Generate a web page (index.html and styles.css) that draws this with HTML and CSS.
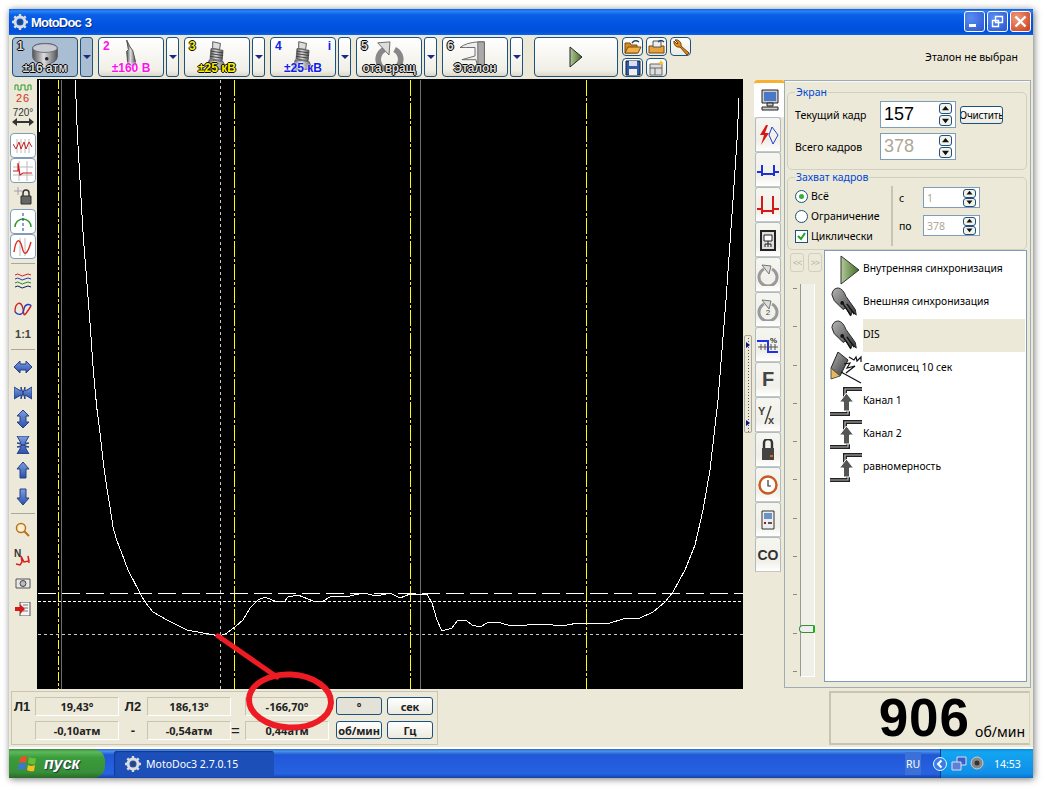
FILE: index.html
```html
<!DOCTYPE html>
<html lang="ru">
<head>
<meta charset="utf-8">
<title>MotoDoc 3</title>
<link rel="stylesheet" href="styles.css">
</head>
<body>
<svg class="defs" width="0" height="0">
  <defs>
    <linearGradient id="gm" x1="0" y1="0" x2="1" y2="0"><stop offset="0" stop-color="#555"/><stop offset=".45" stop-color="#ddd"/><stop offset="1" stop-color="#555"/></linearGradient>
    <linearGradient id="gb" x1="0" y1="0" x2="0" y2="1"><stop offset="0" stop-color="#7f9fe0"/><stop offset="1" stop-color="#2a4fa8"/></linearGradient>
    <linearGradient id="gg" x1="0" y1="0" x2="1" y2="0"><stop offset="0" stop-color="#b4c99a"/><stop offset="1" stop-color="#3f6b24"/></linearGradient>
    <linearGradient id="gd" x1="0" y1="0" x2="1" y2="1"><stop offset="0" stop-color="#b4b4b4"/><stop offset="1" stop-color="#333"/></linearGradient>
    <symbol id="plug" viewBox="0 0 30 36">
      <path d="M10 2l9 2-1 7-8-1z" fill="#ddd" stroke="#444"/>
      <path d="M8 10l14 2-1 12-14-2z" fill="url(#gm)" stroke="#555"/>
      <path d="M8 13l14 2M8 16l14 2M7 19l14 2" stroke="#333" fill="none"/>
      <path d="M6 23l16 2 4 9H3z" fill="url(#gm)" stroke="#555"/>
    </symbol>
    <symbol id="sync" viewBox="0 0 32 33">
      <path d="M2 8Q3 1 9 1q5 1 8 9l10 14 1 6-4-4-2 5-5-9-3 2-4-4Q3 15 2 8z" fill="url(#gd)" stroke="#222"/>
      <circle cx="13" cy="17" r="2" fill="#111"/>
      <path d="M14 18l8 12M18 18l8 11" stroke="#111" stroke-width="1.500" fill="none"/>
    </symbol>
    <symbol id="chan" viewBox="0 0 32 30">
      <path d="M32 2H15V11M18 15V27H0" fill="none" stroke="#222" stroke-width="4"/>
      <path d="M32 2H15V11M18 15V27H0" fill="none" stroke="#bbb" stroke-width="1.200"/>
      <path d="M16.500 6l-7 9h4v9h6v-9h4z" fill="#555" stroke="#fff"/>
    </symbol>
    <symbol id="up" viewBox="0 0 10 8"><path d="M5 1l4 5H1z" fill="#111"/></symbol>
    <symbol id="dn" viewBox="0 0 10 8"><path d="M5 7L1 2h8z" fill="#111"/></symbol>
    <symbol id="gear" viewBox="0 0 16 16">
      <circle cx="8" cy="8" r="5" fill="none" stroke="#ddd" stroke-width="3"/>
      <path d="M8 0v3M8 13v3M0 8h3M13 8h3M2.300 2.300l2 2M11.700 11.700l2 2M2.300 13.700l2-2M11.700 4.300l2-2" stroke="#ddd" stroke-width="2.400"/>
      <circle cx="8" cy="8" r="2" fill="#345"/>
    </symbol>
  </defs>
</svg>

<div class="screen">
  <div class="window">
    <header class="titlebar">
      <svg class="title-ico" width="16" height="16"><use href="#gear"/></svg>
      <span class="title-text">MotoDoc 3</span>
      <div class="winbtns">
        <span class="wb"><i class="wb-min"></i></span>
        <span class="wb"><svg width="15" height="15" viewBox="0 0 15 15"><path d="M5.500 2.500h7v6h-7zM2.500 6.500h6v6h-6z" fill="none" stroke="#fff" stroke-width="1.400"/></svg></span>
        <span class="wb wb-close"><svg width="15" height="15" viewBox="0 0 15 15"><path d="M2.500 2.500l10 10M12.500 2.500l-10 10" stroke="#fff" stroke-width="2.400"/></svg></span>
      </div>
    </header>

    <div class="toolbar">
      <div class="chbtn is-on">
        <span class="chnum c-out">1</span>
        <svg class="chico" width="30" height="32" viewBox="0 0 34 32"><path d="M3 7c0-7 28-7 28 0v9c0 5-5 8-8 8l-3 6h-7l-4-7c-3-1-6-3-6-7z" fill="url(#gm)" stroke="#556"/><ellipse cx="17" cy="7" rx="14" ry="5" fill="#c8ccd2" stroke="#667"/><circle cx="19" cy="19" r="2" fill="#223"/></svg>
        <span class="chlabel c-out">±16 атм</span>
      </div>
      <div class="chdrop is-on"><i></i></div>
      <div class="chbtn">
        <span class="chnum c-mag">2</span>
        <svg class="chico" width="14" height="28" viewBox="0 0 16 32"><path d="M3 0l4 8 3 4 3 12v5H5l-1-5-1-11 2-2z" fill="url(#gm)" stroke="#444"/></svg>
        <span class="chlabel c-mag">±160 В</span>
      </div>
      <div class="chdrop"><i></i></div>
      <div class="chbtn">
        <span class="chnum c-yel">3</span>
        <svg class="chico" width="26" height="31"><use href="#plug"/></svg>
        <span class="chlabel c-yel">±25 кВ</span>
      </div>
      <div class="chdrop"><i></i></div>
      <div class="chbtn">
        <span class="chnum c-blue">4</span><span class="chi c-blue">i</span>
        <svg class="chico" width="26" height="31"><use href="#plug"/></svg>
        <span class="chlabel c-blue">±25 кВ</span>
      </div>
      <div class="chdrop"><i></i></div>
      <div class="chbtn">
        <span class="chnum c-out">5</span>
        <svg class="chico" width="32" height="31" viewBox="0 0 34 33"><path d="M12 10a12 12 0 1 0 11 0" fill="none" stroke="#888" stroke-width="6"/><path d="M5 3l13-1-1 14z" fill="#ddd" stroke="#666"/></svg>
        <span class="chlabel c-out chlabel-tight">ота вращ</span>
      </div>
      <div class="chdrop"><i></i></div>
      <div class="chbtn">
        <span class="chnum c-out">6</span>
        <svg class="chico" width="34" height="30" viewBox="0 0 36 32"><path d="M2 8q6-5 19-6h7v26l-7 1-2-8H4l14-4V8H8z" fill="#eee" stroke="#666"/><path d="M21 2h7v27h-7z" fill="#aaa" stroke="#666"/></svg>
        <span class="chlabel c-out">Эталон</span>
      </div>
      <div class="chdrop"><i></i></div>
      <div class="playbtn"><svg width="14" height="22" viewBox="0 0 14 22"><path d="M1 1l12 10L1 21z" fill="url(#gg)" stroke="#222"/></svg></div>
      <div class="minigrid">
        <span class="mini"><svg width="18" height="16" viewBox="0 0 18 16"><path d="M1 14V4h5l1 2h6v8z" fill="#d98a1e" stroke="#7a4a10"/><path d="M1 14l3-6h13l-3 6z" fill="#f2b04a" stroke="#7a4a10"/><path d="M8 4q3-4 7-1" fill="none" stroke="#246" stroke-width="1.500"/></svg></span>
        <span class="mini"><svg width="18" height="16" viewBox="0 0 18 16"><path d="M1 14V7h15v7z" fill="#e6a23c" stroke="#7a4a10"/><path d="M5 2h8v6H5z" fill="#eee" stroke="#555"/><path d="M10 3q3-3 6 0" fill="none" stroke="#246" stroke-width="1.500"/></svg></span>
        <span class="mini"><svg width="18" height="18" viewBox="0 0 18 18"><path d="M3 2l3 3-1 1-3-3a5 5 0 0 0 6 6l7 8 2-2-8-7a5 5 0 0 0-6-6z" fill="#e08a1a" stroke="#70400c"/></svg></span>
        <span class="mini"><svg width="16" height="16" viewBox="0 0 16 16"><path d="M1 1h14v14H1z" fill="#2f5ba8" stroke="#123"/><path d="M4 1h8v5H4z" fill="#dde"/><path d="M4 9h8v6H4z" fill="#eee"/></svg></span>
        <span class="mini"><svg width="16" height="16" viewBox="0 0 16 16"><path d="M1 4h12v11H1zM1 8h12M6 8v7" fill="#ddd" stroke="#666"/><path d="M12 0l1 2 2 1-2 1-1 2-1-2-2-1 2-1z" fill="#f2c230"/></svg></span>
      </div>
      <div class="status">Эталон не выбран</div>
    </div>

    <div class="body">
      <nav class="lefttools">
        <div class="ti h23"><svg width="18" height="21" viewBox="0 0 18 21"><path d="M1 7V2h3v5h3V2h4v5h3V2h3v5" fill="none" stroke="#2a9a2a"/><text x="9" y="19" class="ico-text" fill="#d03020">26</text></svg></div>
        <div class="ti h25"><svg width="24" height="22" viewBox="0 0 24 22"><text x="12" y="9" class="ico-text2">720°</text><path d="M1 15l5-4v3h12v-3l5 4-5 4v-3H6v3z" fill="#333"/></svg></div>
        <div class="ti tg tg-first"><svg width="20" height="14" viewBox="0 0 20 14"><path d="M4 0v14M8 0v14M12 0v14M16 0v14" stroke="#bbb"/><path d="M0 5l3 5 3-7 2 7 3-7 2 7 3-7 3 5" fill="none" stroke="#d02020"/></svg></div>
        <div class="ti tg"><svg width="20" height="20" viewBox="0 0 20 20"><path d="M6 0v20M14 0v20M0 6h20M0 14h20" stroke="#bbb"/><path d="M0 10h5V2l2 12 3-2h9" fill="none" stroke="#d02020" stroke-width="1.200"/></svg></div>
        <div class="ti h26"><svg width="20" height="18" viewBox="0 0 20 18"><path d="M1 4h8M5 0v8" stroke="#a898b8"/><path d="M8 9h10v8H8z" fill="#666" stroke="#333"/><path d="M10 9V6a3 3 0 0 1 6 0v3" fill="none" stroke="#333" stroke-width="1.500"/></svg></div>
        <div class="ti tg"><svg width="18" height="18" viewBox="0 0 18 18"><path d="M1 14a8 8 0 0 1 16 0" fill="none" stroke="#2a9a2a" stroke-width="1.500"/><path d="M9 0v18" stroke="#203a90" stroke-dasharray="3 2"/></svg></div>
        <div class="ti tg"><svg width="20" height="18" viewBox="0 0 20 18"><path d="M7 0v18M12 0v18" stroke="#bbb"/><path d="M1 14C3 0 7 0 9 9s5 9 9-5" fill="none" stroke="#d83020" stroke-width="1.400"/></svg></div>
        <div class="tsep"></div>
        <div class="ti h28"><svg width="18" height="16" viewBox="0 0 18 16"><path d="M1 2q3-2 5 0t5 0 6 0" fill="none" stroke="#d82020"/><path d="M1 6q3-2 5 0t5 0 6 0" fill="none" stroke="#2040c0"/><path d="M1 10q3-2 5 0t5 0 6 0" fill="none" stroke="#209020"/><path d="M1 14q3-2 5 0t5 0 6 0" fill="none" stroke="#102060"/></svg></div>
        <div class="ti h28"><svg width="18" height="16" viewBox="0 0 18 16"><path d="M1 11C1 0 8 0 9 8s1 8 8-3" fill="none" stroke="#d02020" stroke-width="1.400"/><path d="M1 11c4 4 8 3 9-3s7-5 7-3" fill="none" stroke="#2040c0" stroke-width="1.400"/></svg></div>
        <div class="ti h22 oneone">1:1</div>
        <div class="tsep"></div>
        <div class="ti h27"><svg width="18" height="14" viewBox="0 0 18 14"><path d="M0 7l6-6v3h6V1l6 6-6 6v-3H6v3z" fill="url(#gb)" stroke="#243f88"/></svg></div>
        <div class="ti h25"><svg width="18" height="14" viewBox="0 0 18 14"><path d="M0 1l7 4v-4l2 6-2 6v-4l-7 4zM18 1l-7 4v-4l-2 6 2 6v-4l7 4z" fill="url(#gb)" stroke="#243f88"/></svg></div>
        <div class="ti h27"><svg width="14" height="18" viewBox="0 0 14 18"><path d="M7 0l6 6h-3v6h3l-6 6-6-6h3V6H1z" fill="url(#gb)" stroke="#243f88"/></svg></div>
        <div class="ti h25"><svg width="14" height="18" viewBox="0 0 14 18"><path d="M1 0h12L9 7h4L7 9 1 7h4zM1 18h12L9 11h4L7 9l-6 2h4z" fill="url(#gb)" stroke="#243f88"/></svg></div>
        <div class="ti h26"><svg width="14" height="17" viewBox="0 0 14 17"><path d="M7 0l6 7h-3v9H4V7H1z" fill="url(#gb)" stroke="#243f88"/></svg></div>
        <div class="ti h27"><svg width="14" height="17" viewBox="0 0 14 17"><path d="M7 17l6-7h-3V1H4v9H1z" fill="url(#gb)" stroke="#243f88"/></svg></div>
        <div class="tsep tsep-s"></div>
        <div class="ti h28"><svg width="16" height="16" viewBox="0 0 16 16"><circle cx="6" cy="6" r="4.500" fill="#f8f0d8" stroke="#c07010" stroke-width="1.500"/><path d="M9 9l5 5" stroke="#c07010" stroke-width="2"/></svg></div>
        <div class="ti h25"><svg width="18" height="18" viewBox="0 0 18 18"><text x="0" y="9" class="ico-n">N</text><path d="M2 16l4 1 2-3-1-6 3 6 5-1-1-5 1 7" fill="none" stroke="#d82020" stroke-width="1.500"/></svg></div>
        <div class="ti h27"><svg width="16" height="12" viewBox="0 0 16 12"><path d="M1 2h14v9H1z" fill="#e8e8e8" stroke="#555"/><circle cx="8" cy="6.500" r="3" fill="#bbb" stroke="#444"/></svg></div>
        <div class="ti h26"><svg width="16" height="14" viewBox="0 0 16 14"><path d="M5 0h10v14H5z" fill="#f4f4f4" stroke="#555"/><path d="M8 3h5M8 6h5M8 9h5" stroke="#777"/><path d="M0 5h5V2l5 5-5 5V9H0z" fill="#d81818"/></svg></div>
      </nav>

      <main class="chart">
        <svg class="plot" viewBox="37 79 706 610" width="706" height="610">
          <path d="M58.500 80V689" class="l-y l-dd"/>
          <path d="M61.500 80V689" class="l-g"/>
          <path d="M220.500 80V689" class="l-gd"/>
          <path d="M234.500 80V689" class="l-y l-ld"/>
          <path d="M410.500 80V689" class="l-y l-ld"/>
          <path d="M420.500 80V689" class="l-g"/>
          <path d="M586.500 80V689" class="l-y l-ld"/>
          <path d="M38 593.500H743" class="l-w l-long"/>
          <path d="M38 601.500H743" class="l-w l-short"/>
          <path d="M38 634.500H743" class="l-gd"/>
          <path d="M39.500 80V132" class="l-curve"/>
          <path d="M75.300 80L77.300 133L80 180L83.300 237L86.700 280L90 323L93.300 370L96.700 407L100 433L103.300 463L106.700 487L110 507L113 527L116.700 540L121.700 553L128 570L140 593L145 602L153 612L167 620L187 630L203 633L220 636L227 633L235 627L243 620L250 608L258 600L265 597L277 602L285 601L288 597L298 595L313 601L323 601L330 597L343 596L350 596L363 593L377 596L390 593L400 598L410 594L427 594L432 603L437 620L442 631L452 628L458 620L467 621L472 625L480 627L487 623L497 622L508 625L527 625L533 624L553 625L567 625L578 623L610 623L623 619L640 618L653 612L665 602L673 592L685 570L695 545L703 510L710 470L718 400L726 300L733 200L737 140L739 98" class="l-curve"/>
        </svg>
      </main>

      <div class="splitter"><i></i><i></i></div>

      <aside class="side">
        <div class="tabs">
          <div class="tab tab-on"><svg width="20" height="22" viewBox="0 0 20 22"><path d="M2 1h16v13H2z" fill="#ccc" stroke="#222"/><path d="M4 3h12v9H4z" fill="#4a78c8"/><path d="M7 14h6v3H7zM2 18h16v3H2z" fill="#ccc" stroke="#222"/></svg></div>
          <div class="tab"><svg width="22" height="22" viewBox="0 0 22 22"><path d="M9 1L3 11h4L4 21l8-12H8l3-8z" fill="#d81818"/><path d="M15 3l6 8-5 9M15 3l-3 8 4 9" fill="none" stroke="#2040d0"/></svg></div>
          <div class="tab"><svg width="22" height="14" viewBox="0 0 22 14"><path d="M0 9h5M5 2v11M5 11h12M17 2v11M17 9h5" fill="none" stroke="#1c30d8" stroke-width="2"/></svg></div>
          <div class="tab"><svg width="22" height="20" viewBox="0 0 22 20"><path d="M0 14h5M5 1v18M5 16h11M16 1v18M16 14h6" fill="none" stroke="#d81818" stroke-width="2"/></svg></div>
          <div class="tab"><svg width="18" height="22" viewBox="0 0 18 22"><path d="M2 2h14v19H2z" fill="#ddd" stroke="#222" stroke-width="2"/><path d="M5 6h8v6H5z" fill="#fff" stroke="#222"/><path d="M9 12v6M6 18v-3h6v3" fill="none" stroke="#222"/></svg></div>
          <div class="tab"><svg width="22" height="22" viewBox="0 0 22 22"><path d="M7 5a9 9 0 1 0 8 0" fill="none" stroke="#999" stroke-width="3"/><path d="M5 1l9 1-2 8z" fill="#ddd" stroke="#777"/></svg></div>
          <div class="tab"><svg width="22" height="22" viewBox="0 0 22 22"><path d="M7 5a9 9 0 1 0 8 0" fill="none" stroke="#999" stroke-width="3"/><path d="M5 1l9 1-2 8z" fill="#ddd" stroke="#777"/><text x="11" y="16" class="ico-two">2</text></svg></div>
          <div class="tab"><svg width="22" height="20" viewBox="0 0 22 20"><path d="M0 6h11v11h10" fill="none" stroke="#1c30f0" stroke-width="2"/><path d="M1 12h20M4 9v6M8 9v6M14 9v6M18 9v6" stroke="#555"/><text x="13" y="8" class="ico-pct">%</text></svg></div>
          <div class="tab tab-f">F</div>
          <div class="tab"><svg width="20" height="20" viewBox="0 0 20 20"><text x="0" y="10" class="ico-yx">Y</text><path d="M13 1L7 19" stroke="#444" stroke-width="1.500"/><text x="10" y="19" class="ico-yx">x</text></svg></div>
          <div class="tab"><svg width="14" height="22" viewBox="0 0 14 22"><path d="M3 10V4a4 4 0 0 1 8 0v6" fill="none" stroke="#333" stroke-width="2.400"/><path d="M1 9h12v12H1z" fill="#444"/><path d="M9 17h3" stroke="#e86010" stroke-width="2"/></svg></div>
          <div class="tab"><svg width="20" height="20" viewBox="0 0 20 20"><circle cx="10" cy="10" r="8.500" fill="#fff" stroke="#c85a20" stroke-width="2.400"/><path d="M10 5v6h3" fill="none" stroke="#333" stroke-width="1.200"/></svg></div>
          <div class="tab"><svg width="14" height="20" viewBox="0 0 14 20"><path d="M1 1h12v18H1z" fill="#eee" stroke="#333"/><path d="M3 3h8v6H3z" fill="#6a93c8"/><path d="M3 12h2v2H3z" fill="#a01020"/><path d="M7 12h4v2H7z" fill="#555"/></svg></div>
          <div class="tab tab-co">CO</div>
        </div>

        <div class="panel">
          <fieldset class="grp grp-screen">
            <legend>Экран</legend>
            <div class="framerow">
              <label class="lbl-frame">Текущий кадр</label>
              <div class="spin spin-big"><span class="spin-val">157</span><span class="spin-arrows"><b><svg width="9" height="7"><use href="#up"/></svg></b><b><svg width="9" height="7"><use href="#dn"/></svg></b></span></div>
              <span class="clearbtn">Очистить</span>
            </div>
            <div class="framerow framerow-2">
              <label class="lbl-frame">Всего кадров</label>
              <div class="spin spin-big is-dis"><span class="spin-val">378</span><span class="spin-arrows"><b><svg width="9" height="7"><use href="#up"/></svg></b><b><svg width="9" height="7"><use href="#dn"/></svg></b></span></div>
            </div>
          </fieldset>

          <fieldset class="grp grp-cap">
            <legend>Захват кадров</legend>
            <div class="caprow">
              <div class="capleft">
                <div class="opt"><span class="radio radio-on"></span>Всё</div>
                <div class="opt"><span class="radio"></span>Ограничение</div>
                <div class="opt"><span class="check"><svg width="11" height="11" viewBox="0 0 11 11"><path d="M2 5l3 3 4-6" fill="none" stroke="#21a121" stroke-width="2"/></svg></span>Циклически</div>
              </div>
              <div class="capright">
                <div class="caprange"><span class="rlbl">с</span><div class="spin spin-sm is-dis"><span class="spin-val">1</span><span class="spin-arrows"><b><svg width="9" height="6"><use href="#up"/></svg></b><b><svg width="9" height="6"><use href="#dn"/></svg></b></span></div></div>
                <div class="caprange"><span class="rlbl">по</span><div class="spin spin-sm is-dis"><span class="spin-val">378</span><span class="spin-arrows"><b><svg width="9" height="6"><use href="#up"/></svg></b><b><svg width="9" height="6"><use href="#dn"/></svg></b></span></div></div>
              </div>
            </div>
          </fieldset>

          <div class="lower">
            <div class="sliderwrap">
              <div class="navbtns"><span class="nav">&lt;&lt;</span><span class="nav">&gt;&gt;</span></div>
              <div class="slider">
                <div class="ticks"><i></i><i></i><i></i><i></i><i></i><i></i><i></i><i></i><i></i><i></i><i></i></div>
                <div class="track"></div>
                <div class="thumb"></div>
              </div>
            </div>
            <ul class="list">
              <li class="row"><span class="rico rico-r"><svg width="20" height="30" viewBox="0 0 20 30"><path d="M1 1l18 14L1 29z" fill="url(#gg)" stroke="#333"/></svg></span><span class="rtxt">Внутренняя синхронизация</span></li>
              <li class="row"><span class="rico"><svg width="30" height="31"><use href="#sync"/></svg></span><span class="rtxt">Внешняя синхронизация</span></li>
              <li class="row is-sel"><span class="rico"><svg width="30" height="31"><use href="#sync"/></svg></span><span class="rtxt">DIS</span></li>
              <li class="row"><span class="rico"><svg width="32" height="33" viewBox="0 0 32 33"><path d="M8 0l10 8-8 16-9-8z" fill="url(#gd)" stroke="#222"/><path d="M1 16l9 8-9 3z" fill="#e8b860" stroke="#555"/><path d="M11 20l20 11M14 12l6-1-3 5 8-2-9 7M19 5l5 3 2-3 1 4 4-4v5" fill="none" stroke="#111" stroke-width="1.200"/></svg></span><span class="rtxt">Самописец 10 сек</span></li>
              <li class="row"><span class="rico"><svg width="32" height="30"><use href="#chan"/></svg></span><span class="rtxt">Канал 1</span></li>
              <li class="row"><span class="rico"><svg width="32" height="30"><use href="#chan"/></svg></span><span class="rtxt">Канал 2</span></li>
              <li class="row"><span class="rico"><svg width="32" height="30"><use href="#chan"/></svg></span><span class="rtxt">равномерность</span></li>
            </ul>
          </div>
        </div>
      </aside>
    </div>

    <footer class="bottom">
      <div class="readout">
        <span class="rl">Л1</span><span class="cell">19,43°</span><span class="rl rl-c">Л2</span><span class="cell">186,13°</span><span class="rl"></span><span class="cell">-166,70°</span>
        <span class="ubtn is-pressed">°</span><span class="ubtn">сек</span>
        <span class="rl"></span><span class="cell">-0,10атм</span><span class="rl rl-c">-</span><span class="cell">-0,54атм</span><span class="rl rl-eq">=</span><span class="cell">0,44атм</span>
        <span class="ubtn">об/мин</span><span class="ubtn">Гц</span>
      </div>
      <div class="rpm"><span class="rpm-val">906</span><span class="rpm-unit">об/мин</span></div>
    </footer>
  </div>

  <div class="taskbar">
    <div class="start">
      <svg width="20" height="18" viewBox="0 0 20 18"><path d="M2 3q4-3 7-1l-1 6q-3-2-7 0z" fill="#e8502a"/><path d="M11 2q3 2 7 1l-1 6q-4 1-7-1z" fill="#6dbb3a"/><path d="M1 9q4-2 7 0l-1 6q-3-2-7 0z" fill="#3a78d8"/><path d="M10 10q3 2 7 0l-1 6q-4 1-7-1z" fill="#f4c020"/></svg>
      <span>пуск</span>
    </div>
    <div class="task"><svg width="16" height="16"><use href="#gear"/></svg><span>MotoDoc3 2.7.0.15</span></div>
    <div class="lang">RU</div>
    <div class="tray">
      <span class="tray-arrow"><svg width="10" height="10" viewBox="0 0 10 10"><path d="M6.500 1.500L3 5l3.500 3.500" fill="none" stroke="#fff" stroke-width="2"/></svg></span>
      <svg width="16" height="16" viewBox="0 0 16 16"><path d="M6 1h9v8H6z" fill="#3a5ec8" stroke="#dde"/><path d="M1 6h9v8H1z" fill="#5f80d8" stroke="#dde"/></svg>
      <svg width="16" height="16" viewBox="0 0 16 16"><circle cx="7" cy="7" r="6" fill="#888" stroke="#ccc"/><circle cx="7" cy="7" r="2.500" fill="#333"/><path d="M10 15q4-2 5-6" fill="none" stroke="#5f80d8"/></svg>
      <span class="clock">14:53</span>
    </div>
  </div>

  <svg class="annot" width="1047" height="791" viewBox="0 0 1047 791">
    <path d="M218 636L277 677" stroke="#ed1c24" stroke-width="5" stroke-linecap="round" fill="none"/>
    <ellipse cx="290" cy="701" rx="41" ry="26.500" stroke="#ed1c24" stroke-width="6" fill="none" transform="rotate(3 290 701)"/>
  </svg>
</div>
</body>
</html>
```

FILE: styles.css
```css
* { box-sizing: border-box; }
html, body { margin: 0; padding: 0; background: #fff; overflow: hidden; }
body { width: 1047px; height: 791px; font-family: "Noto Sans", sans-serif; font-size: 10.500px; color: #000; position: relative; }
.defs { position: absolute; }

.screen { position: absolute; left: 9px; top: 9px; width: 1024px; height: 769px; display: flex; flex-direction: column; box-shadow: 1px 1px 7px rgba(0,0,0,.55); }
.window { height: 738px; flex: none; display: flex; flex-direction: column; background: #ece9d8; }

.titlebar { height: 26px; flex: none; display: flex; align-items: center; padding: 0 2px 0 3px; color: #fff; background: linear-gradient(#0a5ce4 0, #2a86f4 8%, #0a5fe8 22%, #0054e0 60%, #0050d8 88%, #0a62f0 100%); }
.title-ico { margin-right: 3px; }
.title-text { font: bold 13px "Liberation Sans", sans-serif; letter-spacing: -.8px; word-spacing: 1px; text-shadow: 1px 1px 0 #0a2a80; }
.winbtns { margin-left: auto; display: flex; gap: 2px; padding-bottom: 1px; }
.wb { width: 21px; height: 21px; border: 1px solid #fff; border-radius: 3px; background: radial-gradient(circle at 30% 30%, #5a8cf0, #2a56d0); display: flex; align-items: center; justify-content: center; }
.wb-min { width: 7px; height: 3px; background: #fff; margin: 8px 5px 0 0; }
.wb-close { background: radial-gradient(circle at 30% 30%, #f09a7c, #c83a18); }

.toolbar { height: 44px; flex: none; display: flex; align-items: flex-start; padding: 2px 0 0 3px; }
.chbtn { position: relative; width: 66px; height: 40px; border: 1px solid #1c5180; border-radius: 4px; background: linear-gradient(#fff, #f0efe6 85%, #dcd8c8); overflow: hidden; }
.chbtn.is-on { background: #a9bdd3; }
.chdrop { width: 13px; height: 40px; margin: 0 5px 0 2px; border: 1px solid #1c5180; border-radius: 3px; background: linear-gradient(#fff, #f0efe6 85%, #dcd8c8); display: flex; align-items: center; justify-content: center; }
.chdrop.is-on { background: #a9bdd3; }
.chdrop i { width: 0; height: 0; border-left: 4px solid transparent; border-right: 4px solid transparent; border-top: 4px solid #1c2a80; }
.chnum { position: absolute; left: 4px; top: 1px; font: bold 12px "Liberation Sans", sans-serif; }
.chi { position: absolute; right: 4px; top: 1px; font: bold 12px "Liberation Sans", sans-serif; }
.chico { position: absolute; left: 50%; top: 2px; transform: translateX(-50%); }
.chlabel { position: absolute; left: 0; right: 0; bottom: 1px; text-align: center; font: bold 12px "Liberation Sans", sans-serif; white-space: nowrap; }
.chlabel-tight { letter-spacing: -.2px; }
.c-out { color: #d8d8d8; text-shadow: 1px 0 0 #000, -1px 0 0 #000, 0 1px 0 #000, 0 -1px 0 #000; }
.c-mag { color: #ff10e8; text-shadow: 0 0 2px #fff, 0 0 2px #fff; }
.c-yel { color: #f8f000; text-shadow: 1px 0 0 #000, -1px 0 0 #000, 0 1px 0 #000, 0 -1px 0 #000; }
.c-blue { color: #1020e8; text-shadow: 0 0 2px #fff, 0 0 2px #fff; }
.playbtn { width: 84px; height: 40px; margin: 0 4px 0 6px; border: 1px solid #1c5180; border-radius: 4px; background: linear-gradient(#fff, #f0efe6 85%, #dcd8c8); display: flex; align-items: center; justify-content: center; }
.minigrid { display: grid; grid-template-columns: repeat(3, 21px); grid-auto-rows: 19px; column-gap: 3px; row-gap: 2px; }
.mini { border: 1px solid #1c5180; border-radius: 4px; background: linear-gradient(#fff, #ecebe0); display: flex; align-items: center; justify-content: center; }
.status { margin: 13px 15px 0 auto; line-height: 14px; white-space: nowrap; }

.body { height: 610px; flex: none; display: flex; }
.lefttools { width: 28px; flex: none; display: flex; flex-direction: column; padding-top: 3px; align-items: center; }
.ti { width: 26px; height: 25px; display: flex; align-items: center; justify-content: center; flex: none; }
.h22 { height: 22px; } .h23 { height: 23px; } .h25 { height: 25px; } .h26 { height: 26px; } .h27 { height: 27px; } .h28 { height: 28px; }
.tg { border: 1px solid #7f9db9; border-radius: 4px; background: #fff; }
.tg-first { margin-top: 3px; }
.tsep { width: 24px; height: 8px; flex: none; position: relative; }
.tsep::after { content: ""; position: absolute; left: 0; right: 0; top: 4px; height: 1px; background: #aca899; }
.tsep-s { height: 6px; }
.tsep-s::after { top: 3px; }
.oneone { font: bold 11px "Liberation Sans", sans-serif; color: #444; }
.ico-text { font: 11px "Liberation Sans", sans-serif; text-anchor: middle; letter-spacing: 1px; }
.ico-text2 { font: 10px "Liberation Sans", sans-serif; text-anchor: middle; fill: #333; }
.ico-n { font: bold 10px "Liberation Sans", sans-serif; fill: #333; }
.ico-two { font: 8px "Liberation Sans", sans-serif; text-anchor: middle; fill: #444; }
.ico-pct { font: bold 8px "Liberation Sans", sans-serif; fill: #333; }
.ico-yx { font: bold 11px "Liberation Sans", sans-serif; fill: #444; }

.chart { width: 706px; height: 610px; flex: none; background: #000; }
.plot { display: block; }
.l-y, .l-g, .l-gd, .l-w, .l-curve { fill: none; stroke-width: 1; shape-rendering: crispEdges; }
.l-y { stroke: #ffff00; }
.l-dd { stroke-dasharray: 9 2 3 2; stroke-width: 1.500; }
.l-ld { stroke-dasharray: 16 2 3 2; }
.l-g { stroke: #6e6e6e; }
.l-gd { stroke: #c8c8c8; stroke-dasharray: 3 3; }
.l-w { stroke: #fff; }
.l-long { stroke-dasharray: 18 6; }
.l-short { stroke-dasharray: 3 2; }
.l-curve { stroke: #fff; stroke-width: 1; }

.splitter { width: 8px; height: 98px; margin: 256px 2px 0 1px; flex: none; border: 1px solid #aca899; border-radius: 2px; background: repeating-linear-gradient(#ece9d8 0 2px, #555 2px 3px); background-size: 1px 100%; background-repeat: no-repeat; background-position: center; display: flex; flex-direction: column; justify-content: space-between; align-items: center; padding: 6px 0; }
.splitter i { width: 0; height: 0; border-top: 3px solid transparent; border-bottom: 3px solid transparent; border-left: 4px solid #101080; }

.side { flex: 1; display: flex; min-width: 0; padding-top: 1px; }
.tabs { width: 30px; flex: none; display: flex; flex-direction: column; align-items: flex-start; }
.tab { width: 26px; height: 35px; margin-left: 1px; border: 1px solid #b0bcc4; border-bottom: 1px solid #c8c8c0; border-radius: 3px 3px 0 0; background: linear-gradient(#f6f6f0, #f0efe8 70%, #fff); display: flex; align-items: center; justify-content: center; flex: none; }
.tab-on { width: 31px; height: 37px; margin-left: 0; background: #fff; border: 0; border-top: 3px solid #f8b030; border-radius: 4px 4px 0 0; }
.tab-f { font: bold 20px "Liberation Sans", sans-serif; color: #444; }
.tab-co { font: bold 14px "Liberation Sans", sans-serif; color: #333; }

.panel { width: 247px; height: 608px; flex: none; border: 1px solid #a9b0b4; padding: 0 3px 0 2px; background: #ece9d8; border-top: 2px solid #fafaf8; outline: 1px solid #a0acb4; outline-offset: -1px; }
.grp { margin: 0; padding: 0 0 0 7px; border: 1px solid #d0d0bf; border-radius: 5px; position: relative; min-width: 0; }
.grp legend { margin-left: 0; padding: 0 1px; color: #0046d5; line-height: 12px; }
.grp-screen { height: 84px; margin-top: 4px; }
.grp-cap { height: 79px; margin-top: 1px; }
.framerow { display: flex; align-items: center; height: 27px; margin-top: 3px; }
.framerow-2 { margin-top: 5px; }
.lbl-frame { width: 85px; white-space: nowrap; }
.spin { position: relative; border: 1px solid #7f9db9; background: #fff; display: flex; align-items: center; }
.spin-big { width: 76px; height: 27px; padding-left: 3px; font: 18px "Liberation Sans", sans-serif; }
.spin-sm { width: 57px; height: 21px; padding-left: 3px; }
.spin-val { flex: 1; }
.is-dis { color: #aca899; }
.spin-arrows { display: flex; flex-direction: column; gap: 1px; margin-right: 3px; }
.spin-arrows b { width: 13px; height: 11px; border: 1px solid #1c5180; border-radius: 3px; background: #f4f3ea; display: flex; align-items: center; justify-content: center; }
.spin-sm .spin-arrows { gap: 0; }
.spin-sm .spin-arrows b { height: 9px; }
.clearbtn { margin-left: 4px; width: 43px; height: 18px; border: 1px solid #1c5180; border-radius: 3px; background: linear-gradient(#fff, #ecebe0); display: flex; align-items: center; justify-content: center; font-size: 10px; letter-spacing: -.2px; overflow: hidden; white-space: nowrap; }

.caprow { display: flex; margin-top: 3px; }
.capleft { width: 98px; border-right: 2px solid #c8c4b0; height: 60px; display: flex; flex-direction: column; }
.opt { display: flex; align-items: center; gap: 3px; height: 20px; white-space: nowrap; }
.radio { width: 13px; height: 13px; border: 1px solid #1c5180; border-radius: 50%; background: #fff; display: flex; align-items: center; justify-content: center; }
.radio-on::after { content: ""; width: 5px; height: 5px; border-radius: 50%; background: #35b035; }
.check { width: 13px; height: 13px; border: 1px solid #1c5180; background: #fff; display: flex; align-items: center; justify-content: center; }
.capright { flex: 1; display: flex; flex-direction: column; gap: 7px; padding: 1px 0 0 6px; }
.caprange { display: flex; align-items: center; }
.rlbl { width: 24px; }

.lower { display: flex; }
.sliderwrap { width: 37px; flex: none; padding: 3px 0 0 3px; }
.navbtns { display: flex; gap: 4px; }
.nav { width: 14px; height: 19px; border: 1px solid #d0d0bf; border-radius: 3px; color: #b8b4a4; display: flex; align-items: center; justify-content: center; font-size: 9px; letter-spacing: -1px; }
.slider { position: relative; height: 393px; margin-top: 12px; display: flex; }
.ticks { width: 10px; height: 384px; margin-top: 4px; display: flex; flex-direction: column; justify-content: space-between; align-items: flex-start; padding-left: 3px; }
.ticks i { width: 4px; height: 1px; background: #8a8a7a; }
.track { width: 15px; height: 393px; border-left: 1px solid #999; border-right: 1px solid #fff; border-bottom: 1px solid #fff; background: #f0f0e8; }
.thumb { position: absolute; left: 9px; top: 341px; width: 16px; height: 8px; background: #eee; border: 1px solid #3a8a3a; border-right: 2px solid #18b018; border-radius: 4px 1px 1px 4px; }

.list { list-style: none; margin: 0; padding: 2px 0 0; width: 203px; height: 432px; border: 1px solid #7f9db9; background: #fff; }
.row { display: flex; height: 33px; align-items: center; }
.rico { width: 38px; height: 33px; flex: none; display: flex; align-items: center; padding-left: 5px; }
.rico-r { padding-left: 15px; }
.rtxt { flex: 1; height: 33px; line-height: 31px; font-size: 10.300px; white-space: nowrap; margin-right: 1px; }
.is-sel .rtxt { background: #ece9d8; }

.bottom { flex: 1; display: flex; align-items: flex-start; padding: 2px 3px 0 2px; justify-content: space-between; }
.readout { width: 427px; height: 54px; border: 1px solid #c8c4b0; padding: 5px 0 0 2px; display: grid; grid-template-columns: 21px 84px 28px 84px 14px 84px 53px 51px; grid-template-rows: 19px 19px; row-gap: 5px; align-items: stretch; }
.rl { font: bold 13px "Liberation Sans", sans-serif; display: flex; align-items: center; color: #222; }
.rl-c { justify-content: center; }
.rl-eq { font-size: 15px; font-weight: normal; }
.cell { border: 1px solid #c8c4b0; border-right-color: #fff; border-bottom-color: #fff; display: flex; align-items: center; justify-content: center; font: bold 11px "Noto Sans", sans-serif; color: #222; white-space: nowrap; }
.ubtn { margin-left: 7px; width: 46px; height: 18px; border: 1px solid #1c5180; border-radius: 3px; background: linear-gradient(#fff, #ecebe0); display: flex; align-items: center; justify-content: center; font: bold 11px "Noto Sans", sans-serif; white-space: nowrap; letter-spacing: -.1px; color: #222; }
.ubtn + .ubtn { margin-left: 5px; }
.ubtn.is-pressed { background: #e4e2d6; }
.rpm { width: 201px; height: 54px; border: 2px solid #c8c4b0; border-right: 1px solid #d8d4c0; display: flex; align-items: flex-end; justify-content: flex-end; padding: 0 4px 4px 0; }
.rpm-val { font: bold 53px/42px "Liberation Sans", sans-serif; letter-spacing: 1px; margin-right: 5px; }
.rpm-unit { font: 14px/15px "Noto Sans", sans-serif; }

.taskbar { height: 29px; flex: none; display: flex; align-items: stretch; background: linear-gradient(#3168d5 0, #4993e6 8%, #2157d7 20%, #2663e0 85%, #1941a5 100%); color: #fff; margin-top: 2px; position: relative; }
.start { width: 96px; flex: none; display: flex; align-items: center; gap: 6px; padding-left: 9px; background: linear-gradient(#388e3c 0, #5db85d 10%, #3a9c3a 30%, #389038 80%, #2a6a2a 100%); border-radius: 0 12px 12px 0; font: italic bold 16px "Liberation Sans", sans-serif; text-shadow: 1px 1px 1px #234; }
.task { width: 160px; margin: 2px 0 1px 9px; display: flex; align-items: center; gap: 5px; padding-left: 11px; background: #1d4fb8; border-radius: 3px; box-shadow: inset 1px 1px 1px #123a90; }
.lang { margin: 3px 19px 3px auto; width: 16px; display: flex; align-items: center; justify-content: center; background: #3a70d8; }
.tray { width: 93px; flex: none; display: flex; align-items: center; background: linear-gradient(#0c8ae0, #13a5f0 10%, #0f8fe8 85%, #0c6ec8); border-left: 1px solid #0a3a90; gap: 3px; }
.tray-arrow { width: 14px; height: 14px; margin: 0 1px 0 -8px; border-radius: 50%; border: 1px solid #dff; background: #3a7ce8; display: flex; align-items: center; justify-content: center; }
.clock { margin-left: 5px; }

.annot { position: absolute; left: -9px; top: -9px; pointer-events: none; }
```
